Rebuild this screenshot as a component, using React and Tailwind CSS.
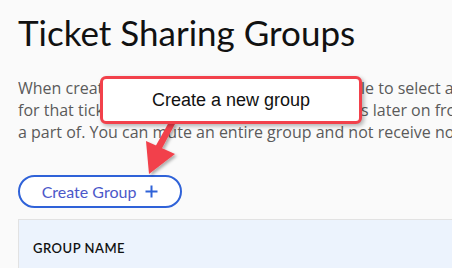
import React from 'react'

const font = { fontFamily: 'Lato, "Open Sans", sans-serif' }

function Arrow() {
  return (
    <svg className="absolute left-0 top-0 pointer-events-none" width="452" height="268" viewBox="0 0 452 268">
      <defs>
        <filter id="sh" x="-50%" y="-50%" width="200%" height="200%">
          <feDropShadow dx="2" dy="2" stdDeviation="1.5" floodColor="#000" floodOpacity="0.3" />
        </filter>
      </defs>
      <g filter="url(#sh)" fill="#f2414b">
        <polygon points="169,122 175,124 160,152 154,149" />
        <polygon points="146,141 175,154 149,174" />
      </g>
    </svg>
  )
}

export default function App() {
  return (
    <div className="relative w-[452px] h-[268px] overflow-hidden bg-[#fafafa]" style={font}>
      <div className="pl-[18px] pt-[10px]">
        <h1 className="text-[35px] leading-[44px] text-[#111] font-normal whitespace-nowrap">Ticket Sharing Groups</h1>
        <div
          className="mt-[23px] text-[16px] leading-[22px] text-[#5a5a5a] whitespace-nowrap"
          style={{ fontFamily: '"Open Sans", sans-serif' }}
        >
          {/* first part of these two lines sits under the callout */}
          <p className="flex">
            <span className="w-[343px] shrink-0 overflow-hidden">When creating a ticket, you will be ab</span>
            <span>le to select a group to share it with</span>
          </p>
          <p className="flex">
            <span className="w-[343px] shrink-0 overflow-hidden">for that ticket and manage its member</span>
            <span>s later on from the groups you are</span>
          </p>
          <p>a part of. You can mute an entire group and not receive notifications.</p>
        </div>
        <button className="mt-[32px] h-[33px] w-[164px] rounded-full border-2 border-[#2f62d8] bg-white flex items-center justify-center gap-[9px] text-[16px] text-[#4b58c9]">
          <span>Create Group</span>
          <svg width="13" height="13" viewBox="0 0 13 13">
            <path d="M6.5 0.5v12M0.5 6.5h12" stroke="#2f62d8" strokeWidth="2" />
          </svg>
        </button>
        <div className="mt-[11px] h-[60px] bg-[#ecf3fd] border-t border-l border-[#e2e2e2] pl-[14px] pt-[15px]">
          <span className="text-[13px] font-semibold tracking-[0.5px] text-[#111]">GROUP NAME</span>
        </div>
      </div>
      <Arrow />
      <div
        className="absolute left-[100px] top-[76px] w-[262px] h-[48px] bg-white border-[3px] border-[#f2414b] rounded-[6px] shadow-[2px_2px_4px_rgba(0,0,0,0.3)] flex items-center justify-center text-[18px] text-[#111]"
        style={{ fontFamily: '"Liberation Sans", Arial, sans-serif' }}
      >
        Create a new group
      </div>
    </div>
  )
}
